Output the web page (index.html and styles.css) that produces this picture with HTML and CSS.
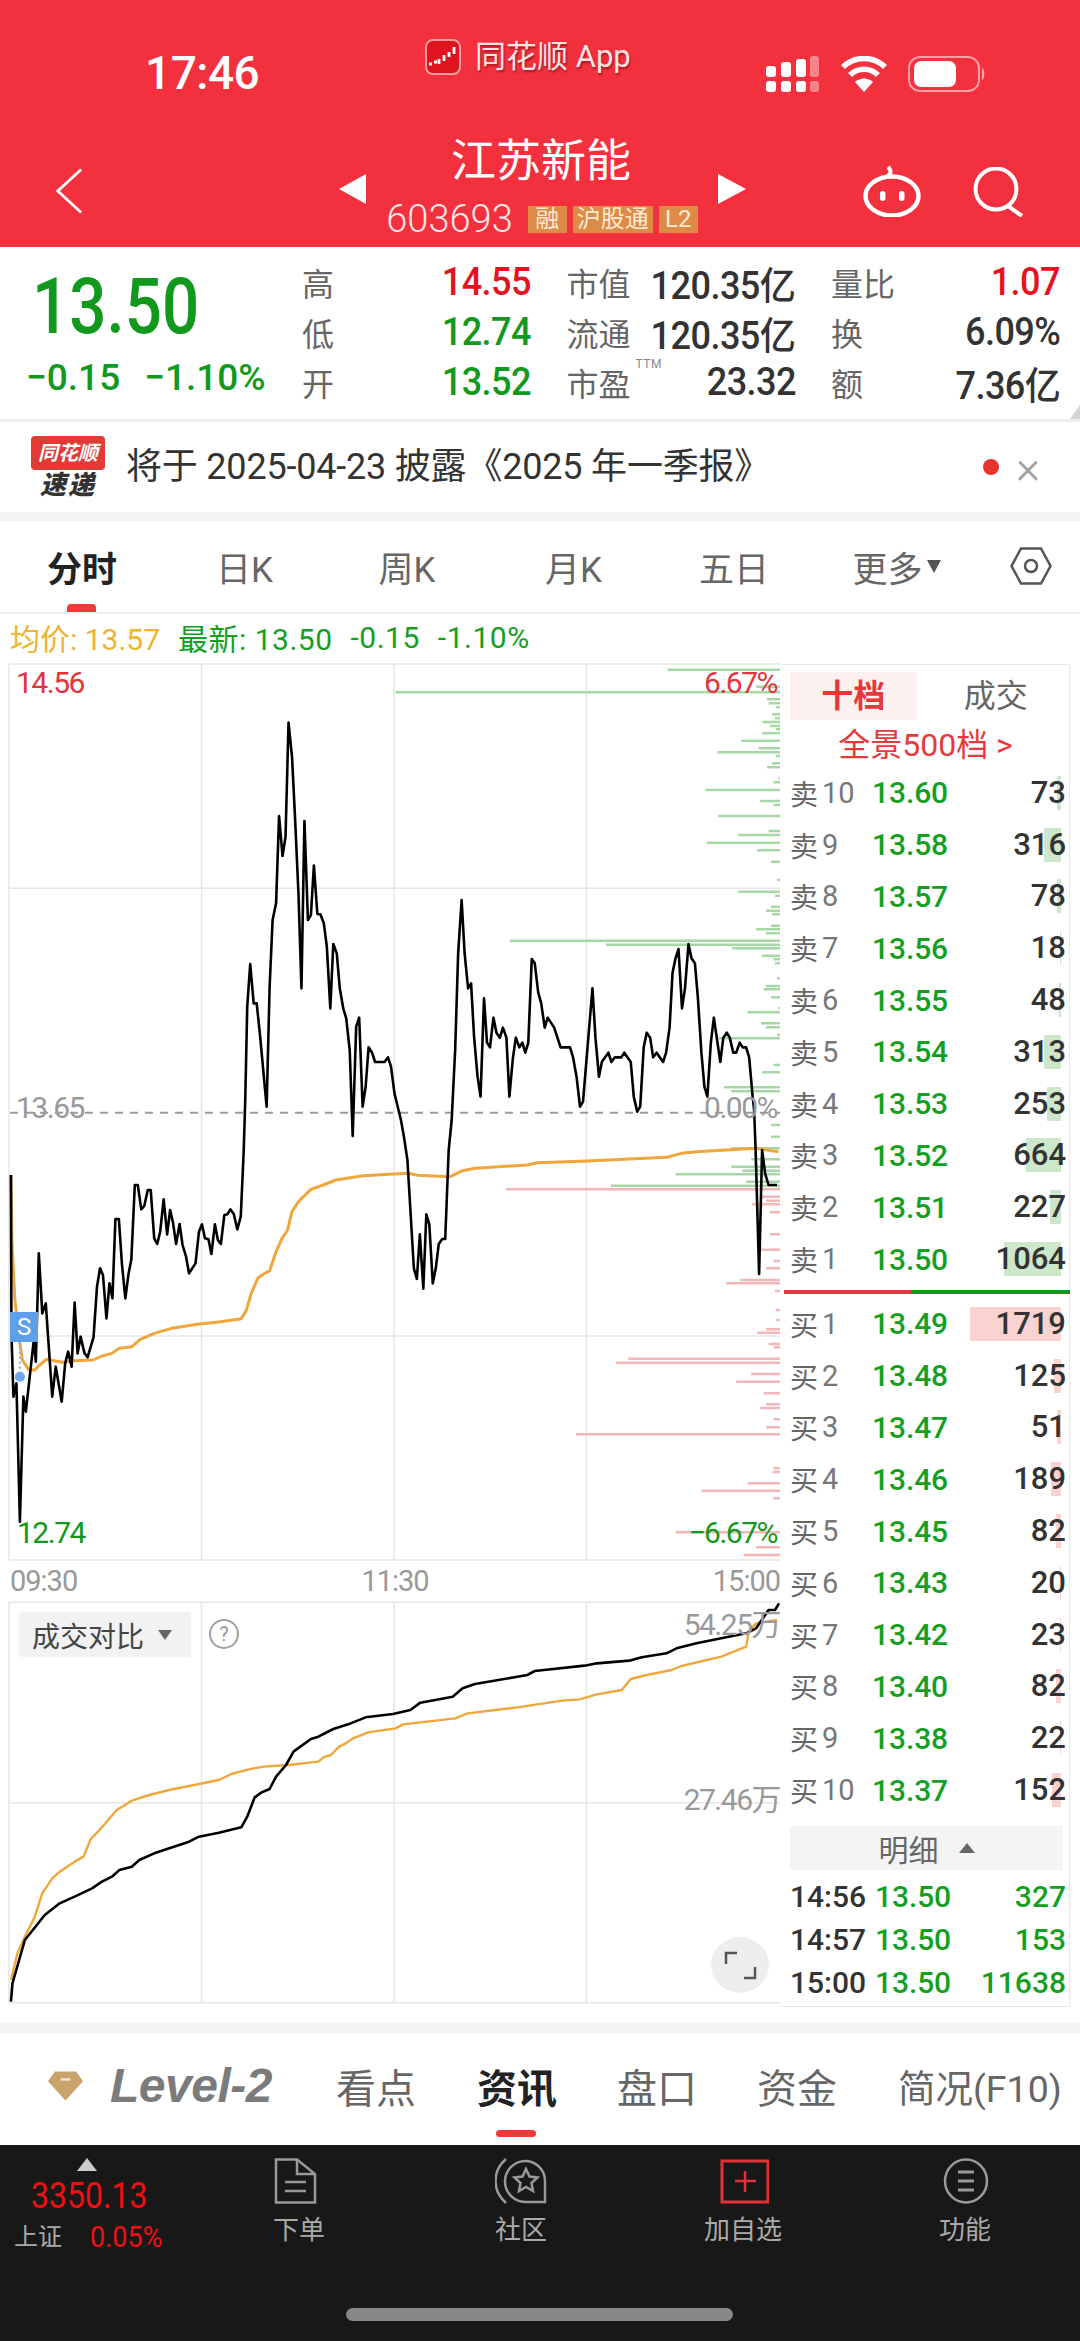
FILE: index.html
```html
<!DOCTYPE html>
<html lang="zh">
<head>
<meta charset="utf-8">
<title>江苏新能</title>
<link rel="stylesheet" href="styles.css">
</head>
<body>
<div class="page">
  <header class="topbar">
    <div class="status">
      <div class="time">17:46</div>
      <div class="app-pill">
        <svg class="app-logo" viewBox="0 0 36 36"><rect x="1" y="1" width="34" height="34" rx="7" fill="#e0141e" stroke="#ff9aa0" stroke-width="2"/><path d="M4 25h3M9 23h3M14 20v5M19 16v6M24 13v5M29 8v7" stroke="#fff" stroke-width="2.800" fill="none"/></svg>
        <span class="app-name">同花顺 App</span>
      </div>
      <div class="sys">
        <svg class="signal" viewBox="0 0 54 36"><g fill="#fff"><rect x="0" y="10" width="10" height="11" rx="3"/><rect x="15" y="6" width="10" height="15" rx="3"/><rect x="30" y="3" width="10" height="18" rx="3"/><rect x="0" y="25" width="10" height="11" rx="3"/><rect x="15" y="25" width="10" height="11" rx="3"/><rect x="30" y="25" width="10" height="11" rx="3"/><g opacity=".4"><rect x="44" y="0" width="9" height="21" rx="3"/><rect x="44" y="25" width="9" height="11" rx="3"/></g></g></svg>
        <svg class="wifi" viewBox="0 0 48 36"><path d="M24 36 15 26a13 13 0 0 1 18 0z" fill="#fff"/><path d="M10 19a20 20 0 0 1 28 0M3 11a30 30 0 0 1 42 0" fill="none" stroke="#fff" stroke-width="5.500"/></svg>
        <svg class="battery" viewBox="0 0 78 36"><rect x="1" y="1" width="70" height="34" rx="11" fill="none" stroke="#fff" stroke-opacity=".55" stroke-width="2"/><rect x="6" y="5" width="42" height="26" rx="7" fill="#fff"/><path d="M74 12c3 1 3 11 0 12z" fill="#fff" fill-opacity=".6"/></svg>
      </div>
    </div>
    <div class="navrow">
      <svg class="back" viewBox="0 0 30 50"><path d="M28 2 3 25l25 23" fill="none" stroke="#fff" stroke-width="3"/></svg>
      <div class="stock-switch">
        <span class="tri tri-left"></span>
        <div class="stock-id">
          <div class="stock-name">江苏新能</div>
          <div class="stock-code"><span class="code">603693</span><span class="tag">融</span><span class="tag">沪股通</span><span class="tag">L2</span></div>
        </div>
        <span class="tri tri-right"></span>
      </div>
      <svg class="robot" viewBox="0 0 58 52"><path d="M24 11c4-1 5-5 1-9" fill="none" stroke="#fff" stroke-width="4"/><ellipse cx="29" cy="31" rx="26.500" ry="19.500" fill="none" stroke="#fff" stroke-width="4.500"/><rect x="17" y="26" width="5.500" height="10" rx="2.700" fill="#fff"/><rect x="36" y="26" width="5.500" height="10" rx="2.700" fill="#fff"/></svg>
      <svg class="search" viewBox="0 0 52 50"><circle cx="23" cy="22" r="20.500" fill="none" stroke="#fff" stroke-width="4"/><path d="M35 39l14 10" stroke="#fff" stroke-width="4"/></svg>
    </div>
  </header>

  <section class="quote">
    <div class="quote-main">
      <div class="last-price">13.50</div>
      <div class="last-change"><span>−0.15</span><span>−1.10%</span></div>
    </div>
    <div class="quote-grid">
      <div class="cell"><span class="lab">高</span><span class="val up">14.55</span></div>
      <div class="cell"><span class="lab">市值</span><span class="val">120.35亿</span></div>
      <div class="cell"><span class="lab">量比</span><span class="val up">1.07</span></div>
      <div class="cell"><span class="lab">低</span><span class="val down">12.74</span></div>
      <div class="cell"><span class="lab">流通</span><span class="val">120.35亿</span></div>
      <div class="cell"><span class="lab">换</span><span class="val">6.09%</span></div>
      <div class="cell"><span class="lab">开</span><span class="val down">13.52</span></div>
      <div class="cell"><span class="lab">市盈<sup class="ttm">TTM</sup></span><span class="val">23.32</span></div>
      <div class="cell"><span class="lab">额</span><span class="val">7.36亿</span></div>
    </div>
    <span class="corner"></span>
  </section>

  <section class="notice">
    <div class="flash">
      <div class="flash-top">同花顺</div>
      <div class="flash-bottom">速递</div>
    </div>
    <div class="notice-text">将于 2025-04-23 披露《2025 年一季报》</div>
    <span class="red-dot"></span>
    <span class="close">×</span>
  </section>

  <nav class="periods">
    <span class="period period-a active">分时</span>
    <span class="period period-b">日K</span>
    <span class="period period-c">周K</span>
    <span class="period period-d">月K</span>
    <span class="period period-e">五日</span>
    <span class="period period-f">更多<i class="caret"></i></span>
    <svg class="hex" viewBox="0 0 42 38"><path d="M11 1.500h20L40.500 19 31 36.500H11L1.500 19z" fill="none" stroke="#555" stroke-width="2.500"/><circle cx="21" cy="19" r="6" fill="none" stroke="#555" stroke-width="2.500"/></svg>
  </nav>

  <div class="legend">
    <span class="avg">均价: 13.57</span>
    <span class="newest">最新: 13.50</span>
    <span class="newest">-0.15</span>
    <span class="newest">-1.10%</span>
  </div>

  <main class="market">
    <div class="charts">
      <svg class="plot" viewBox="0 0 1568 4050" preserveAspectRatio="none">
        <g class="grid">
          <path d="M18 12V2700M405 12V2700M792 12V2700M1179 12V2700M18 12H1568M18 685H1568M18 2028H1568M18 2700H1568"/>
          <g transform="translate(0 2700)"><path d="M18 127V1328M405 127V1328M792 127V1328M1179 127V1328M18 127H1568M18 728H1568M18 1328H1568"/></g>
        </g>
        <path class="dash" d="M20 1358H1568"/>
        <path class="bar-g" d="M1342 29H1568M795 97H1568M1520 80H1568M1542 118H1568M1545 130H1568M1560 142H1568M1552 163H1568M1558 175H1568M1533 186H1568M1548 198H1568M1560 208H1568M1532 220H1568M1490 242H1568M1525 265H1568M1442 277H1568M1560 288H1568M1552 310H1568M1542 322H1568M1565 355H1568M1555 367H1568M1418 390H1568M1528 423H1568M1555 435H1568M1444 468H1568M1545 513H1568M1484 525H1568M1421 548H1568M1522 571H1568M1550 605H1568M1562 660H1568M1484 695H1568M1558 707H1568M1550 740H1568M1540 752H1568M1552 763H1568M1550 797H1568M1520 808H1568M1540 820H1568M1025 842H1568M1218 854H1568M1472 865H1568M1532 887H1568M1555 898H1568M1558 910H1568M1562 955H1568M1540 978H1568M1535 988H1568M1550 1012H1568M1565 1045H1568M1503 1057H1568M1530 1090H1568M1540 1102H1568M1562 1124H1568M1445 1135H1568M1555 1215H1568M1532 1237H1568M1455 1282H1568M1470 1294H1568M1550 1395H1568M1550 1430H1568M1470 1465H1568M1510 1498H1568M1470 1520H1568M1492 1532H1568M1358 1543H1568M1500 1565H1568M1228 1577H1568"/>
        <path class="bar-r" d="M1017 1588H1568M1530 1610H1568M1540 1622H1568M1512 1633H1568M1548 1657H1568M1548 1723H1568M1525 1769H1568M1555 1803H1568M1540 1825H1568M1488 1860H1568M1460 1870H1568M1558 1893H1568M1560 1950H1568M1560 1980H1568M1540 2008H1568M1522 2018H1568M1545 2052H1568M1555 2062H1568M1263 2096H1568M1238 2108H1568M1510 2142H1568M1480 2165H1568M1535 2200H1568M1540 2233H1568M1528 2244H1568M1555 2278H1568M1540 2302H1568M1158 2323H1568M1555 2425H1568M1553 2436H1568M1503 2470H1568M1410 2492H1568M1555 2515H1568M1358 2617H1568M1520 2662H1568M1495 2685H1568"/>
        <polyline class="line-avg" transform="translate(0 1320)" points="22,225 24,430 30,600 38,710 45,780 58,810 70,810 80,795 93,778 125,787 150,782 187,780 205,768 225,760 240,745 265,740 282,718 310,700 345,685 400,672 440,666 485,656 495,632 505,580 518,535 530,522 542,512 555,455 567,415 578,390 587,335 600,305 625,268 650,255 675,240 730,227 820,220 840,226 905,230 930,212 955,205 1060,195 1080,188 1180,183 1340,172 1370,160 1400,155 1520,145 1565,155"/>
        <polyline class="line-price" transform="translate(0 1320)" points="22,225 23,700 27,890 33,850 40,1265 47,890 52,935 62,800 68,720 72,785 78,460 85,640 92,610 105,890 112,800 124,905 131,790 137,755 144,800 150,608 156,760 162,710 170,760 176,772 188,712 195,560 201,505 207,525 214,655 220,550 226,595 232,357 239,357 245,490 252,595 258,525 264,478 271,255 277,255 284,328 290,318 297,270 303,270 310,415 316,432 322,395 329,298 336,403 342,330 348,370 354,432 361,372 367,435 374,470 380,520 393,490 400,395 406,373 412,415 419,418 425,462 432,373 438,420 444,432 451,345 457,343 463,328 470,342 477,388 484,350 490,150 493,0"/>
        <polyline class="line-price" points="493,1320 497,1040 503,912 510,1030 516,1030 523,1130 536,1340 542,980 548,780 555,730 561,468 568,588 574,530 580,188 587,290 593,470 600,700 606,985 612,483 619,780 625,765 631,617 638,762 644,763 651,790 657,860 664,1045 670,852 677,880 683,985 690,1045 696,1075 703,1170 709,1428 716,1100 722,1073 729,1340 735,1280 741,1162 748,1178 754,1206 773,1206 780,1192 786,1220 793,1300 806,1380 812,1430 819,1500 825,1650 832,1825 838,1857 844,1723 851,1886 857,1663 863,1693 870,1870 876,1825 882,1752 889,1737 895,1737 902,1470 908,1380 915,1170 921,880 928,720 934,880 941,985 947,970 953,1130 960,1250 966,1310 973,1015 979,1148 985,1162 992,1073 998,1118 1005,1133 1011,1103 1018,1133 1024,1310 1031,1195 1037,1133 1044,1162 1050,1148 1056,1178 1062,1148 1069,897 1075,910 1082,998 1088,1030 1095,1103 1101,1073 1114,1103 1127,1162 1146,1162 1152,1192 1159,1250 1166,1340 1172,1325 1191,985 1197,1133 1204,1250 1210,1205 1223,1178 1229,1206 1236,1192 1249,1192 1255,1178 1268,1206 1274,1310 1281,1355 1287,1340 1294,1162 1300,1118 1307,1133 1313,1192 1320,1178 1333,1206 1339,1178 1346,1103 1352,938 1358,895 1364,867 1371,1045 1377,985 1384,852 1390,895 1397,910 1403,1015 1410,1178 1416,1280 1422,1310 1429,1148 1435,1073 1448,1206 1454,1133 1461,1118 1467,1133 1474,1178 1480,1178 1487,1148 1493,1162 1500,1162 1506,1192 1513,1310 1516,1350 1519,1470 1526,1842 1532,1470 1538,1540 1545,1575 1562,1575"/>
        <path class="s-link" d="M40 2045V2150"/>
        <ellipse class="s-dot" cx="40" cy="2150" rx="10" ry="15"/>
        <g transform="translate(0 2700)">
          <polyline class="line-avg thin" points="22,1260 35,1180 50,1130 70,1070 85,1000 105,955 120,935 150,905 168,890 182,838 200,810 235,750 265,722 300,705 340,690 400,672 440,660 465,642 500,628 530,620 580,615 640,605 650,592 665,585 682,560 695,550 710,535 740,517 795,505 810,493 915,475 940,460 1040,442 1130,422 1165,418 1200,403 1250,390 1268,357 1300,345 1350,330 1370,318 1450,290 1500,260 1505,215 1520,190 1562,180"/>
          <polyline class="line-price" points="22,1325 25,1270 50,1140 90,1065 120,1030 150,1010 185,985 205,965 225,950 240,930 265,920 280,900 310,880 380,845 400,830 440,818 485,802 497,770 512,712 525,698 542,687 555,650 575,615 590,575 625,537 640,530 670,507 700,493 735,472 790,462 825,450 845,428 910,410 930,385 955,372 1060,345 1075,333 1175,317 1200,310 1265,302 1290,292 1340,280 1360,265 1400,250 1500,220 1520,205 1545,150 1558,150 1566,130"/>
        </g>
      </svg>
      <span class="lbl lbl-hi up2">14.56</span>
      <span class="lbl lbl-hip up2">6.67%</span>
      <span class="lbl lbl-mid mute">13.65</span>
      <span class="lbl lbl-midp mute">0.00%</span>
      <span class="lbl lbl-lo down">12.74</span>
      <span class="lbl lbl-lop down">−6.67%</span>
      <span class="s-mark">S</span>
      <div class="axis"><span>09:30</span><span>11:30</span><span>15:00</span></div>
      <div class="chip">成交对比<i class="chip-caret"></i></div>
      <span class="help">?</span>
      <span class="lbl lbl-v1 mute">54.25万</span>
      <span class="lbl lbl-v2 mute">27.46万</span>
      <div class="expand"><svg viewBox="0 0 58 56"><path d="M15 27V16h11M44 30v11H33" fill="none" stroke="#555" stroke-width="2.500"/></svg></div>
    </div>

    <aside class="book">
      <div class="book-tabs"><span class="btab on">十档</span><span class="btab">成交</span></div>
      <div class="full500">全景500档 <span class="gt">&gt;</span></div>
      <div class="rows">
        <div class="row"><span class="side">卖</span><span class="lv">10</span><span class="px">13.60</span><span class="qty"><i class="qbar sell" style="width:4px"></i><b>73</b></span></div>
        <div class="row"><span class="side">卖</span><span class="lv">9</span><span class="px">13.58</span><span class="qty"><i class="qbar sell" style="width:17px"></i><b>316</b></span></div>
        <div class="row"><span class="side">卖</span><span class="lv">8</span><span class="px">13.57</span><span class="qty"><i class="qbar sell" style="width:4px"></i><b>78</b></span></div>
        <div class="row"><span class="side">卖</span><span class="lv">7</span><span class="px">13.56</span><span class="qty"><i class="qbar sell" style="width:1px"></i><b>18</b></span></div>
        <div class="row"><span class="side">卖</span><span class="lv">6</span><span class="px">13.55</span><span class="qty"><i class="qbar sell" style="width:2px"></i><b>48</b></span></div>
        <div class="row"><span class="side">卖</span><span class="lv">5</span><span class="px">13.54</span><span class="qty"><i class="qbar sell" style="width:17px"></i><b>313</b></span></div>
        <div class="row"><span class="side">卖</span><span class="lv">4</span><span class="px">13.53</span><span class="qty"><i class="qbar sell" style="width:14px"></i><b>253</b></span></div>
        <div class="row"><span class="side">卖</span><span class="lv">3</span><span class="px">13.52</span><span class="qty"><i class="qbar sell" style="width:35px"></i><b>664</b></span></div>
        <div class="row"><span class="side">卖</span><span class="lv">2</span><span class="px">13.51</span><span class="qty"><i class="qbar sell" style="width:11px"></i><b>227</b></span></div>
        <div class="row"><span class="side">卖</span><span class="lv">1</span><span class="px">13.50</span><span class="qty"><i class="qbar sell" style="width:57px"></i><b>1064</b></span></div>
      </div>
      <div class="ratio"><span class="ratio-buy"></span><span class="ratio-sell"></span></div>
      <div class="rows">
        <div class="row"><span class="side">买</span><span class="lv">1</span><span class="px">13.49</span><span class="qty"><i class="qbar buy" style="width:91px"></i><b>1719</b></span></div>
        <div class="row"><span class="side">买</span><span class="lv">2</span><span class="px">13.48</span><span class="qty"><i class="qbar buy" style="width:7px"></i><b>125</b></span></div>
        <div class="row"><span class="side">买</span><span class="lv">3</span><span class="px">13.47</span><span class="qty"><i class="qbar buy" style="width:4px"></i><b>51</b></span></div>
        <div class="row"><span class="side">买</span><span class="lv">4</span><span class="px">13.46</span><span class="qty"><i class="qbar buy" style="width:10px"></i><b>189</b></span></div>
        <div class="row"><span class="side">买</span><span class="lv">5</span><span class="px">13.45</span><span class="qty"><i class="qbar buy" style="width:5px"></i><b>82</b></span></div>
        <div class="row"><span class="side">买</span><span class="lv">6</span><span class="px">13.43</span><span class="qty"><i class="qbar buy" style="width:1px"></i><b>20</b></span></div>
        <div class="row"><span class="side">买</span><span class="lv">7</span><span class="px">13.42</span><span class="qty"><i class="qbar buy" style="width:1px"></i><b>23</b></span></div>
        <div class="row"><span class="side">买</span><span class="lv">8</span><span class="px">13.40</span><span class="qty"><i class="qbar buy" style="width:5px"></i><b>82</b></span></div>
        <div class="row"><span class="side">买</span><span class="lv">9</span><span class="px">13.38</span><span class="qty"><i class="qbar buy" style="width:1px"></i><b>22</b></span></div>
        <div class="row"><span class="side">买</span><span class="lv">10</span><span class="px">13.37</span><span class="qty"><i class="qbar buy" style="width:9px"></i><b>152</b></span></div>
      </div>
      <div class="detail-head">明细<i class="detail-caret"></i></div>
      <div class="detail"><span class="t">14:56</span><span class="px">13.50</span><span class="dq">327</span></div>
      <div class="detail"><span class="t">14:57</span><span class="px">13.50</span><span class="dq">153</span></div>
      <div class="detail"><span class="t">15:00</span><span class="px">13.50</span><span class="dq">11638</span></div>
    </aside>
  </main>

  <nav class="info-tabs">
    <div class="lv2">
      <svg class="gem" viewBox="0 0 36 30"><path d="M7 0h22l7 10-18 20L0 10z" fill="#c9a36c"/><rect x="13" y="7" width="10" height="2.500" fill="#f3e7d2"/></svg>
      <span class="lv2-text">Level-2</span>
    </div>
    <span class="itab itab-a">看点</span>
    <span class="itab itab-b active">资讯</span>
    <span class="itab itab-c">盘口</span>
    <span class="itab itab-d">资金</span>
    <span class="itab itab-e">简况(F10)</span>
  </nav>

  <footer class="dock">
    <div class="dock-row">
      <div class="index">
        <i class="index-up"></i>
        <div class="index-val">3350.13</div>
        <div class="index-sub"><span>上证</span><b>0.05%</b></div>
      </div>
      <div class="dock-item">
        <svg class="dock-ic" viewBox="0 0 52 46"><path d="M3 1.500h21L42 16v28.500H3z" fill="none" stroke="#999" stroke-width="2.500"/><path d="M24 2v14h17M12 24h21M12 33h21" fill="none" stroke="#999" stroke-width="2.500"/></svg>
        <span>下单</span>
      </div>
      <div class="dock-item">
        <svg class="dock-ic" viewBox="0 0 52 46"><path d="M31 3a20 20 0 0 1 19 20v21H30a20 20 0 0 1 1-41z" fill="none" stroke="#999" stroke-width="2.500"/><path d="M11 1C-3 13-3 33 11 45" fill="none" stroke="#999" stroke-width="2.500"/><path d="m31 11 3.500 7.500 8 1-6 5.500 1.500 8-7-4-7 4 1.500-8-6-5.500 8-1z" fill="none" stroke="#999" stroke-width="2.500"/></svg>
        <span>社区</span>
      </div>
      <div class="dock-item">
        <svg class="dock-ic" viewBox="0 0 52 46"><path d="M5 3h46v41H5z" fill="none" stroke="#e03338" stroke-width="3"/><path d="M28 13v21M18 23h21" fill="none" stroke="#e03338" stroke-width="2.500"/></svg>
        <span>加自选</span>
      </div>
      <div class="dock-item">
        <svg class="dock-ic" viewBox="0 0 52 46"><ellipse cx="27" cy="23" rx="21" ry="21.500" fill="none" stroke="#999" stroke-width="2.500"/><path d="M19 14h16M19 23h16M19 32h16" fill="none" stroke="#999" stroke-width="3"/></svg>
        <span>功能</span>
      </div>
    </div>
    <div class="home"></div>
  </footer>
</div>
</body>
</html>
```

FILE: styles.css
```css
* { box-sizing: border-box; }
html, body { margin: 0; padding: 0; background: #fff; }
body { font-family: Roboto, "Noto Sans CJK SC", sans-serif; color: #333; }
i { display: block; font-style: normal; }
.page { width: 1080px; height: 2341px; overflow: hidden; display: flex; flex-direction: column; }

.up { color: #e3141f; }
.down { color: #10991c; }
.up2 { color: #e3343c; }
.mute { color: #999; }

/* header */
.topbar { height: 247px; background: #f2303e; color: #fff; padding-top: 39px; flex: none; }
.status { display: flex; height: 107px; }
.time { width: 279px; margin-left: 145px; margin-top: 11px; margin-right: 1px; font-size: 46px; line-height: 46px; font-weight: 500; letter-spacing: -.5px; height: 46px; }
.app-pill { display: flex; width: 341px; height: 36px; align-items: center; }
.app-logo { width: 36px; height: 36px; flex: none; }
.app-name { margin-left: 14px; font-size: 31px; line-height: 36px; color: #fbe3e3; text-shadow: 1px 2px 2px rgba(110, 0, 10, .55); }
.sys { display: flex; margin-top: 17px; height: 36px; }
.signal { width: 54px; height: 36px; }
.wifi { width: 48px; height: 36px; margin-left: 20px; }
.battery { width: 78px; height: 36px; margin-left: 20px; }
.navrow { display: flex; height: 94px; padding-left: 55px; }
.back { width: 28px; height: 48px; margin-top: 21px; flex: none; }
.stock-switch { display: flex; width: 407px; margin-left: 256px; justify-content: space-between; flex: none; }
.tri { width: 0; height: 0; margin-top: 28px; border-top: 15.500px solid transparent; border-bottom: 15.500px solid transparent; }
.tri-left { border-right: 27px solid #fff; }
.tri-right { border-left: 28px solid #fff; }
.stock-id { display: flex; flex-direction: column; align-items: center; margin-top: -12px; }
.stock-name { font-size: 45px; line-height: 56px; height: 72px; margin-left: -2px; }
.stock-code { display: flex; align-items: center; height: 27px; gap: 6px; }
.code { font-size: 38px; line-height: 27px; font-weight: 300; margin-right: 9px; color: #fbe6e6; }
.tag { background: #de8b45; color: #fde9d6; font-size: 24px; line-height: 27px; height: 27px; padding: 0 4px; min-width: 39px; text-align: center; white-space: nowrap; }
.robot { width: 58px; height: 52px; margin-left: 117px; margin-top: 19px; flex: none; }
.search { width: 52px; height: 50px; margin-left: 52px; margin-top: 21px; flex: none; }

/* quote */
.quote { position: relative; height: 175px; flex: none; display: flex; border-bottom: 3px solid #eee; background: #fff; }
.quote-main { width: 302px; flex: none; padding-left: 26px; }
.last-price { font-size: 78px; font-weight: 500; line-height: 80px; height: 80px; margin-top: 20px; margin-left: 6px; color: #10991c; transform: scaleX(.84); transform-origin: left center; }
.last-change { display: flex; gap: 24px; margin-top: 11px; font-size: 37px; font-weight: 500; line-height: 40px; color: #10991c; white-space: nowrap; }
.quote-grid { display: grid; grid-template-columns: repeat(3, 228px); grid-auto-rows: 50px; column-gap: 36.500px; padding-top: 10px; }
.cell { display: flex; justify-content: space-between; align-items: center; }
.lab { position: relative; font-size: 32px; color: #666; }
.val { font-size: 38px; font-weight: 500; letter-spacing: -.6px; color: #333; white-space: nowrap; transform: scaleX(.95); transform-origin: right center; margin-right: -1px; }
.val.up { color: #e3141f; }
.val.down { color: #10991c; }
.ttm { position: absolute; left: 69px; top: -2px; font-size: 12px; line-height: 14px; color: #888; letter-spacing: .5px; }
.corner { position: absolute; right: 0; bottom: 0; width: 0; height: 0; border-bottom: 14px solid #d4d4d4; border-left: 10px solid transparent; }

/* notice */
.notice { flex: none; display: flex; align-items: center; padding-left: 31px; border-bottom: 10px solid #f5f5f5; background: #fff; height: 100px; }
.flash { width: 74px; flex: none; text-align: center; }
.flash-top { height: 34px; background: #e23a35; color: #fff; border-radius: 4px; font-size: 20px; line-height: 34px; font-style: italic; font-weight: 700; white-space: nowrap; }
.flash-bottom { margin-top: 2px; height: 26px; font-size: 26px; line-height: 26px; font-style: italic; font-weight: 900; color: #333; letter-spacing: 2px; }
.notice-text { width: 856px; margin-left: 21px; font-size: 36px; line-height: 44px; color: #333; white-space: nowrap; letter-spacing: -.2px; }
.red-dot { width: 16px; height: 16px; border-radius: 50%; background: #e9332f; flex: none; margin-left: 1px; }
.close { margin-left: 17px; font-size: 46px; line-height: 40px; color: #a0a0a0; font-weight: 300; }

/* period tabs */
.periods { position: relative; flex: none; height: 92px; display: flex; align-items: center; border-bottom: 2px solid #eee; background: #fff; font-size: 35px; color: #666; padding-bottom: 2px; }
.period { display: flex; align-items: center; white-space: nowrap; }
.period-a { margin-left: 47px; }
.period-b { margin-left: 99px; }
.period-c { margin-left: 105.500px; }
.period-d { margin-left: 109.500px; }
.period-e { margin-left: 97px; }
.period-f { margin-left: 83.500px; }
.period.active { color: #222; font-weight: 700; }
.period.active::after { content: ""; position: absolute; left: 67px; bottom: 0; width: 29px; height: 8px; background: #f2393a; border-radius: 4px 4px 0 0; }
.caret { margin-left: 5px; border-top: 13px solid #555; border-left: 7px solid transparent; border-right: 7px solid transparent; }
.hex { width: 42px; height: 38px; margin-left: 68.500px; }

.legend { flex: none; height: 46px; display: flex; align-items: center; padding-left: 10px; font-size: 30px; white-space: nowrap; }
.avg { color: #f0b32e; width: 168px; }
.newest { color: #13a01f; margin-right: 18px; letter-spacing: .5px; }

/* market */
.market { flex: none; height: 1363px; display: flex; background: #fff; }
.charts { position: relative; width: 782px; height: 1350px; flex: none; }
.plot { position: absolute; left: 0; top: 0; width: 780px; height: 1350px; }
.grid path { fill: none; stroke: #e6e6e6; stroke-width: 1.500; vector-effect: non-scaling-stroke; }
.dash { fill: none; stroke: #9a9a9a; stroke-width: 2; stroke-dasharray: 8 7; vector-effect: non-scaling-stroke; }
.bar-g { fill: none; stroke: #a5d8a5; stroke-width: 2.500; vector-effect: non-scaling-stroke; }
.bar-r { fill: none; stroke: #f3b7b7; stroke-width: 2.500; vector-effect: non-scaling-stroke; }
.line-price { fill: none; stroke: #000; stroke-width: 2.600; stroke-linejoin: round; vector-effect: non-scaling-stroke; }
.line-avg { fill: none; stroke: #efa63b; stroke-width: 3; stroke-linejoin: round; vector-effect: non-scaling-stroke; }
.line-avg.thin { stroke-width: 2.400; }
.s-link { fill: none; stroke: #7fb0ee; stroke-width: 2; stroke-dasharray: 2 3; vector-effect: non-scaling-stroke; }
.s-dot { fill: #6fa6ee; }
.lbl { position: absolute; font-size: 30px; line-height: 30px; height: 30px; letter-spacing: -1.500px; white-space: nowrap; }
.lbl-hi { left: 16px; top: 8px; }
.lbl-hip { right: 5px; top: 8px; }
.lbl-mid { left: 16px; top: 433px; }
.lbl-midp { right: 5px; top: 433px; }
.lbl-lo { left: 17px; top: 858px; }
.lbl-lop { right: 5px; top: 858px; }
.lbl-v1 { right: 2px; top: 950px; }
.lbl-v2 { right: 2px; top: 1125px; }
.s-mark { position: absolute; left: 10px; top: 652px; width: 28px; height: 30px; background: #5f9fea; color: #fff; font-size: 24px; line-height: 30px; text-align: center; }
.axis { position: absolute; left: 10px; top: 905px; width: 770px; display: flex; justify-content: space-between; font-size: 29px; line-height: 32px; color: #999; letter-spacing: -1px; }
.chip { position: absolute; left: 19px; top: 952px; width: 172px; height: 45px; background: #f2f2f2; border-radius: 3px; display: flex; align-items: center; padding-left: 13px; font-size: 28px; color: #444; white-space: nowrap; }
.chip-caret { margin-left: 14px; border-top: 10px solid #666; border-left: 7px solid transparent; border-right: 7px solid transparent; }
.help { position: absolute; left: 209px; top: 959px; width: 30px; height: 30px; border: 2px solid #a0a0a0; border-radius: 50%; font-size: 20px; line-height: 26px; text-align: center; color: #999; }
.expand { position: absolute; left: 711px; top: 1277px; width: 58px; height: 56px; border-radius: 50%; background: #eee; }
.expand svg { display: block; width: 58px; height: 56px; }

/* order book */
.book { width: 288px; height: 1343px; flex: none; margin-top: 4px; border-top: 1.500px solid #e8e8e8; border-right: 1.500px solid #e8e8e8; border-bottom: 1.500px solid #e8e8e8; padding-left: 8px; }
.book-tabs { display: flex; height: 48px; margin-top: 7px; align-items: center; }
.btab { width: 128px; text-align: center; font-size: 32px; line-height: 48px; color: #666; }
.btab + .btab { width: 148px; margin-left: 6px; }
.btab.on { background: #fdf1f0; color: #e6393c; font-weight: 700; }
.full500 { height: 47px; padding-top: 3px; text-align: center; font-size: 32px; line-height: 44px; color: #e6393c; white-space: nowrap; margin-right: 8px; }
.rows { display: flex; flex-direction: column; }
.row { display: flex; height: 51.800px; align-items: center; white-space: nowrap; }
.side { width: 32px; font-size: 28px; color: #666; }
.lv { width: 50px; font-size: 29px; color: #777; }
.px { width: 100px; font-size: 30px; font-weight: 500; color: #13a01f; letter-spacing: -.1px; flex: none; }
.qty { position: relative; flex: 1; margin-right: 3px; height: 34px; line-height: 34px; font-size: 31px; text-align: right; }
.qty b { position: relative; font-weight: 500; color: #333; }
.qbar { position: absolute; right: 5px; top: 0; height: 34px; }
.qbar.sell { background: #cce7cc; }
.qbar.buy { background: #f9d2d2; }
.ratio { display: flex; height: 4px; margin: 5px -1px 4px -6px; }
.ratio-buy { width: 127px; background: #e03a3c; }
.ratio-sell { flex: 1; background: #10991c; }
.detail-head { height: 44px; margin: 10px 6px 5px 0; background: #f4f4f4; display: flex; align-items: center; justify-content: center; font-size: 30px; color: #666; }
.detail-caret { margin-left: 20px; border-bottom: 10px solid #666; border-left: 8px solid transparent; border-right: 8px solid transparent; }
.detail { display: flex; height: 43px; align-items: center; font-size: 30px; font-weight: 500; margin-right: 3px; }
.t { width: 85px; color: #333; }
.dq { flex: 1; text-align: right; color: #13a01f; }
.detail .px { width: 90px; }

/* info tabs */
.info-tabs { position: relative; flex: none; height: 122px; border-top: 11px solid #f5f5f5; display: flex; align-items: center; font-size: 40px; color: #666; padding-bottom: 8px; background: #fff; white-space: nowrap; }
.lv2 { display: flex; align-items: center; margin-left: 48px; width: 288px; }
.gem { width: 35px; height: 30px; }
.lv2-text { margin-left: 27px; font-family: "Liberation Sans", sans-serif; font-size: 48px; font-weight: 700; font-style: italic; color: #7b7b7b; letter-spacing: -.5px; }
.itab { display: block; }
.itab-b { margin-left: 61px; color: #222; font-weight: 700; }
.itab-c { margin-left: 60px; }
.itab-d { margin-left: 60px; }
.itab-e { margin-left: 61px; font-size: 37.500px; }
.itab.active::after { content: ""; position: absolute; left: 496px; bottom: 8px; width: 40px; height: 7px; background: #f2393a; border-radius: 4px; }

/* dock */
.dock { flex: 1; background: #181818; position: relative; }
.dock-row { display: flex; padding-top: 13px; }
.index { width: 188px; flex: none; position: relative; }
.index-up { margin-left: 77px; width: 0; border-bottom: 13px solid #ccc; border-left: 10px solid transparent; border-right: 10px solid transparent; }
.index-val { margin: 7px 0 0 31px; font-size: 36px; line-height: 36px; color: #ee1111; transform: scaleX(.89); transform-origin: left center; }
.index-sub { display: flex; margin: 8px 0 0 14px; align-items: center; white-space: nowrap; font-size: 24px; line-height: 30px; color: #aaa; }
.index-sub b { margin-left: 28px; font-weight: 400; font-size: 30px; color: #ee1111; transform: scaleX(.9); transform-origin: left center; }
.dock-item { width: 222px; flex: none; display: flex; flex-direction: column; align-items: center; font-size: 26px; color: #aaa; }
.dock-ic { width: 52px; height: 46px; }
.dock-item span { margin-top: 11px; line-height: 30px; }
.home { position: absolute; left: 346px; top: 163px; width: 387px; height: 13px; border-radius: 7px; background: #888; }
```
